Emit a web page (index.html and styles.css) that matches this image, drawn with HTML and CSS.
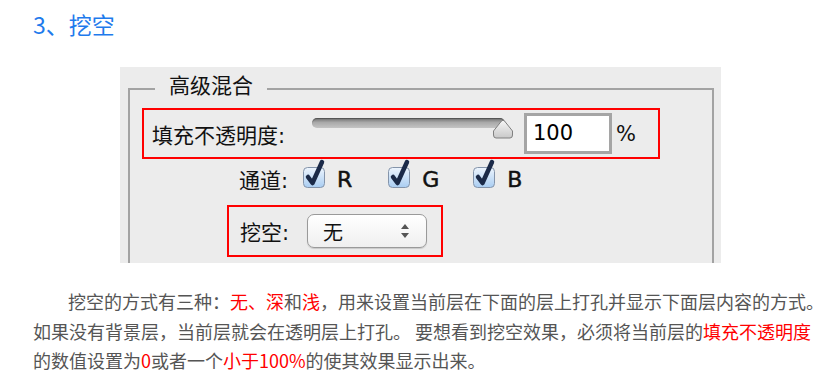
FILE: index.html
```html
<!DOCTYPE html>
<html lang="zh-CN">
<head>
    <meta charset="UTF-8">
    <meta name="viewport" content="width=device-width, initial-scale=1.0">
    <title>3、挖空</title>
    <link rel="stylesheet" href="styles.css">
</head>
<body>

<h2 class="title">3、挖空</h2>

<div class="shot">
    <fieldset class="blend">
        <legend>高级混合</legend>

        <div class="row mark fill">
            <span class="lbl">填充不透明度:</span>
            <div class="slider">
                <div class="track"></div>
                <svg class="thumb" width="22" height="21" viewBox="0 0 22 21">
                    <defs>
                        <linearGradient id="gThumb" x1="0" y1="0" x2="0" y2="1">
                            <stop offset="0" stop-color="#f6f6f6"/>
                            <stop offset="1" stop-color="#c9c9c9"/>
                        </linearGradient>
                    </defs>
                    <path d="M4 20 Q1.5 20 1.5 17 V13 L9.5 3 Q11 1.5 12.5 3 L20.5 13 V17 Q20.5 20 18 20 Z" fill="url(#gThumb)" stroke="#808080" stroke-width="1"/>
                </svg>
            </div>
            <div class="num">100</div>
            <span class="pct">%</span>
        </div>

        <div class="row channels">
            <span class="lbl">通道:</span>
            <span class="chk">
                <svg width="26" height="30" viewBox="0 0 26 30">
                    <defs>
                        <linearGradient id="gBox" x1="0" y1="0" x2="0" y2="1">
                            <stop offset="0" stop-color="#eef5fd"/>
                            <stop offset="1" stop-color="#a9cdf2"/>
                        </linearGradient>
                    </defs>
                    <rect x="1.5" y="8.5" width="21" height="20" rx="4" fill="url(#gBox)" stroke="#8494aa"/>
                    <path d="M6 18 L10.5 24 L20 3" fill="none" stroke="#1b2a48" stroke-width="4.5" stroke-linecap="round" stroke-linejoin="round"/>
                </svg>R
            </span>
            <span class="chk">
                <svg width="26" height="30" viewBox="0 0 26 30">
                    <rect x="1.5" y="8.5" width="21" height="20" rx="4" fill="url(#gBox)" stroke="#8494aa"/>
                    <path d="M6 18 L10.5 24 L20 3" fill="none" stroke="#1b2a48" stroke-width="4.5" stroke-linecap="round" stroke-linejoin="round"/>
                </svg>G
            </span>
            <span class="chk">
                <svg width="26" height="30" viewBox="0 0 26 30">
                    <rect x="1.5" y="8.5" width="21" height="20" rx="4" fill="url(#gBox)" stroke="#8494aa"/>
                    <path d="M6 18 L10.5 24 L20 3" fill="none" stroke="#1b2a48" stroke-width="4.5" stroke-linecap="round" stroke-linejoin="round"/>
                </svg>B
            </span>
        </div>

        <div class="row mark knock">
            <span class="lbl">挖空:</span>
            <div class="select">
                <span>无</span>
                <svg width="10" height="16" viewBox="0 0 10 16">
                    <path d="M5 1 L9 6 H1 Z M5 15 L9 10 H1 Z" fill="#555"/>
                </svg>
            </div>
        </div>
    </fieldset>
</div>

<p class="desc">
    <span class="indent"></span>挖空的方式有三种：<em>无、深</em>和<em>浅</em>，用来设置当前层在下面的层上打孔并显示下面层内容的方式。<br>
    如果没有背景层，当前层就会在透明层上打孔。 要想看到挖空效果，必须将当前层的<em>填充不透明度</em><br>
    的数值设置为<em>0</em>或者一个<em>小于100%</em>的使其效果显示出来。
</p>

</body>
</html>
```

FILE: styles.css
```css
body { margin: 0; background: #fff; font-family: "Noto Sans CJK SC", sans-serif; }

.title { margin: 0; padding: 7px 0 0 33px; font-size: 23px; line-height: 34px; font-weight: normal; color: #1f7bec; }

.shot { margin: 26px 0 0 120px; width: 601px; height: 196px; background: #ececec; overflow: hidden; }

.blend { margin: 6px 7px 0 8px; padding: 0 0 60px 0; border: 2px solid #a3a3a3; font-family: "DejaVu Sans", "Noto Sans CJK SC", sans-serif; font-size: 21px; color: #111; }
.blend legend { margin-left: 25px; padding: 0 14px 6px 14px; line-height: 26px; }

.row { display: flex; align-items: center; }
.mark { border: 2px solid #f00; box-sizing: border-box; }

.fill { margin: 3px 0 0 12px; width: 518px; height: 51px; padding-left: 8px; }
.fill .lbl { width: 160px; }
.slider { position: relative; width: 201px; height: 22px; align-self: flex-start; margin-top: 8px; }
.track { width: 193px; height: 10px; border-radius: 5px; background: linear-gradient(#6e6e6e, #a9a9a9 45%, #c4c4c4); box-shadow: inset 0 1px 1px rgba(0,0,0,0.3); }
.thumb { position: absolute; left: 180px; top: 0; }
.num { margin-left: 11px; width: 88px; height: 41px; box-sizing: border-box; border: 3px solid #a5a5a5; background: #fff; padding-left: 6px; line-height: 35px; color: #000; }
.pct { margin-left: 4px; font-size: 21px; }

.channels { margin: 0 0 0 109px; height: 40px; }
.channels .lbl { width: 63px; }
.chk { display: flex; align-items: center; font-size: 22px; -webkit-text-stroke: 0.5px #111; }
.chk:nth-child(2) { margin-right: 35px; }
.chk:nth-child(3) { margin-right: 33px; }
.chk svg { margin: -10px 9px 0 0; }

.knock { margin: 6px 0 0 97px; width: 216px; height: 52px; padding-left: 11px; }
.knock .lbl { width: 67px; }
.select { display: flex; align-items: center; justify-content: space-between; width: 120px; height: 34px; box-sizing: border-box; padding: 0 16px 0 15px; border: 1px solid #9a9a9a; border-radius: 7px; background: linear-gradient(#ffffff, #efefef); box-shadow: 0 1px 1px rgba(0,0,0,0.15); font-size: 20px; }

.desc { margin: 24px 0 0 33px; font-size: 18px; line-height: 29.5px; color: #555; white-space: nowrap; }
.desc em { font-style: normal; color: #f00; }
.indent { display: inline-block; width: 35px; }
```
